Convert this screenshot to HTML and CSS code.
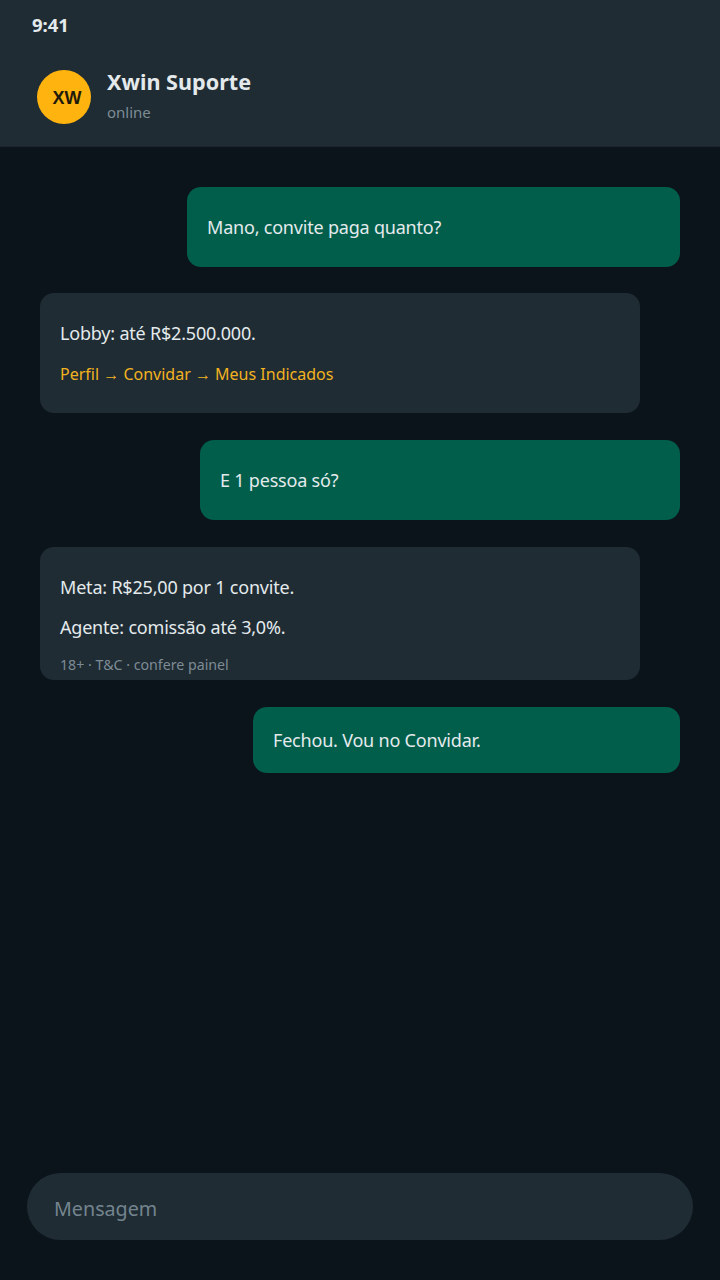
FILE: index.html
```html
<!DOCTYPE html>
<html lang="pt-BR">
    <head>
        <meta charset="utf-8">
        <title>Xwin Suporte</title>
        <link rel="stylesheet" href="styles.css">
    </head>
    <body>
        <div class="app">
            <header class="topbar">
                <div class="clock">9:41</div>
                <div class="contact">
                    <div class="avatar">XW</div>
                    <div class="contact-info">
                        <div class="contact-name">Xwin Suporte</div>
                        <div class="contact-status">online</div>
                    </div>
                </div>
            </header>

            <main class="chat">
                <div class="bubble sent w493">
                    <p>Mano, convite paga quanto?</p>
                </div>
                <div class="bubble received">
                    <p>Lobby: até R$2.500.000.</p>
                    <p class="route">Perfil → Convidar → Meus Indicados</p>
                </div>
                <div class="bubble sent w480">
                    <p>E 1 pessoa só?</p>
                </div>
                <div class="bubble received with-note">
                    <p>Meta: R$25,00 por 1 convite.</p>
                    <p>Agente: comissão até 3,0%.</p>
                    <div class="note">18+ · T&amp;C · confere painel</div>
                </div>
                <div class="bubble sent w427 short">
                    <p>Fechou. Vou no Convidar.</p>
                </div>
            </main>

            <footer class="composer">
                <div class="composer-input">Mensagem</div>
            </footer>
        </div>
    </body>
</html>
```

FILE: styles.css
```css
html, body {
    margin: 0;
    padding: 0;
    height: 100%;
}
body {
    background: #0b141a;
    color: #e4eaec;
    font-family: "Noto Sans", "Open Sans", sans-serif;
}
.app {
    height: 1280px;
    display: flex;
    flex-direction: column;
}

/* top bar */
.topbar {
    flex: none;
    height: 133px;
    background: #1f2c34;
    border-bottom: 1px solid #1a252c;
    padding: 13px 37px 0;
}
.clock {
    margin-left: -5px;
    font-size: 18.5px;
    line-height: 24px;
    font-weight: 700;
}
.contact {
    display: flex;
    align-items: center;
    gap: 16px;
    margin-top: 31px;
}
.avatar {
    width: 54px;
    height: 54px;
    border-radius: 50%;
    background: #ffb30f;
    color: #1f1a0c;
    font-family: "Liberation Sans", sans-serif;
    font-weight: 700;
    font-size: 18px;
    display: flex;
    align-items: center;
    justify-content: center;
    padding: 4px 0 0 6px;
    box-sizing: border-box;
}
.contact-info {
    padding-bottom: 3px;
}
.contact-name {
    font-size: 21.6px;
    line-height: 28px;
    font-weight: 700;
}
.contact-status {
    font-size: 15px;
    line-height: 20px;
    margin-top: 6px;
    color: #7d8b94;
}

/* messages */
.chat {
    flex: 1;
    display: flex;
    flex-direction: column;
    gap: 26.67px;
    padding: 40px 40px 0;
}
.bubble {
    box-sizing: border-box;
    border-radius: 14px;
    padding: 13.9px 20px 13.9px;
    font-size: 18px;
    letter-spacing: -0.2px;
    line-height: 28px;
}
.bubble p {
    margin: 12px 0;
}
.sent {
    align-self: flex-end;
    background: #005e4b;
}
.received {
    width: 600px;
    background: #1f2c34;
}
.w493 { width: 493px; }
.w480 { width: 480px; }
.w427 { width: 427px; }
.short {
    padding-top: 7px;
    padding-bottom: 7px;
}
.bubble .route {
    color: #f2b21f;
    font-size: 16px;
    letter-spacing: 0;
    padding-top: 1px;
    margin-bottom: 11px;
}
.with-note {
    margin-top: 0.5px;
    padding-top: 14.5px;
    padding-bottom: 5px;
}
.note {
    font-size: 14.2px;
    letter-spacing: 0;
    line-height: 20px;
    color: #7d8b94;
    margin-top: 14px;
}

/* input */
.composer {
    flex: none;
    padding: 0 27px 40px;
}
.composer-input {
    height: 67px;
    box-sizing: border-box;
    border-radius: 34px;
    background: #1f2c34;
    padding-left: 27px;
    font-size: 19.7px;
    line-height: 72px;
    color: #74848e;
}
```
